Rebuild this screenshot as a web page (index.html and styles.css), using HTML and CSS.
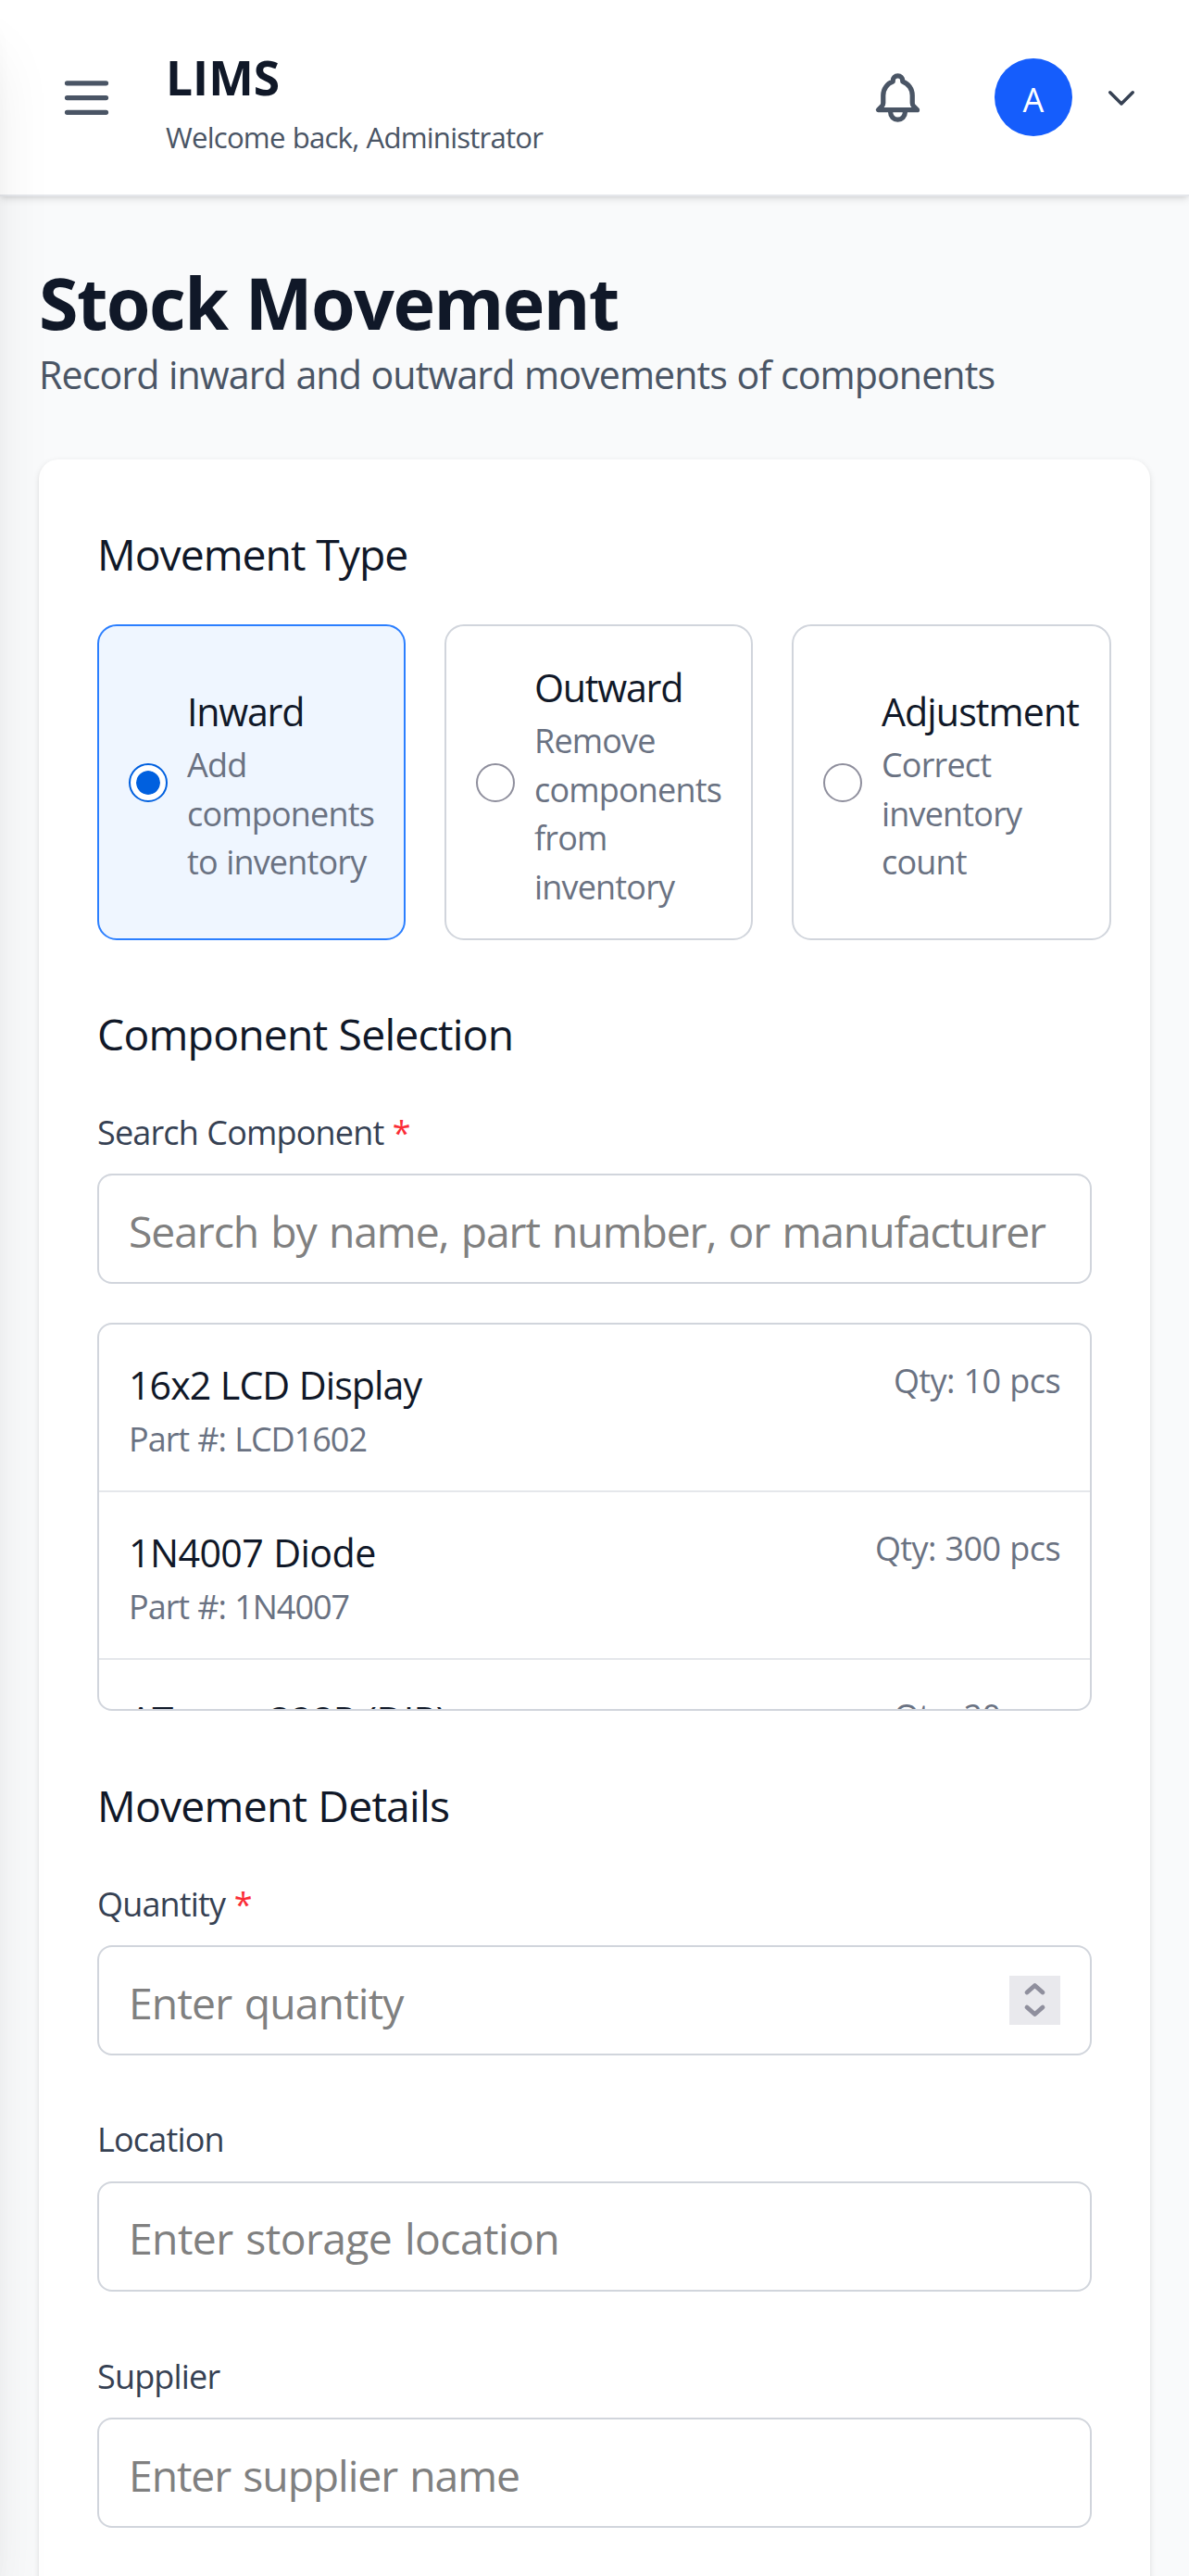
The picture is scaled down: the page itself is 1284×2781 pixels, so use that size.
FILE: index.html
```
<!DOCTYPE html>
<html lang="en">
<head>
<meta charset="utf-8">
<title>LIMS - Stock Movement</title>
<link rel="stylesheet" href="styles.css">
</head>
<body>
<aside class="sidebar"></aside>
<header class="header">
  <svg class="icon" viewBox="0 0 24 24"><path d="M4 6h16M4 12h16M4 18h16"/></svg>
  <div class="brand">
    <h1 class="brand-name">LIMS</h1>
    <p class="brand-welcome">Welcome back, Administrator</p>
  </div>
  <svg class="icon bell" viewBox="0 0 24 24"><path d="M15 17h5l-1.405-1.405A2.032 2.032 0 0118 14.158V11a6.002 6.002 0 00-4-5.659V5a2 2 0 10-4 0v.341C7.67 6.165 6 8.388 6 11v3.159c0 .538-.214 1.055-.595 1.436L4 17h5m6 0v1a3 3 0 11-6 0v-1m6 0H9"/></svg>
  <div class="avatar">A</div>
  <svg class="icon chevron" viewBox="0 0 24 24"><path d="M19 9l-7 7-7-7"/></svg>
</header>
<main class="main">
  <h2 class="title">Stock Movement</h2>
  <p class="subtitle">Record inward and outward movements of components</p>
  <form class="card">
    <section>
      <h3 class="section-title tight">Movement Type</h3>
      <div class="types">
        <label class="type selected">
          <span class="radio"></span>
          <span class="type-text"><span class="type-name tight">Inward</span><span class="type-desc">Add components to inventory</span></span>
        </label>
        <label class="type">
          <span class="radio"></span>
          <span class="type-text"><span class="type-name tight">Outward</span><span class="type-desc">Remove components from inventory</span></span>
        </label>
        <label class="type">
          <span class="radio"></span>
          <span class="type-text"><span class="type-name">Adjustment</span><span class="type-desc">Correct inventory count</span></span>
        </label>
      </div>
    </section>
    <section class="selection">
      <h3 class="section-title">Component Selection</h3>
      <div class="field">
        <label class="label">Search Component <span class="required">*</span></label>
        <div class="control"><input class="input search" type="text" placeholder="Search by name, part number, or manufacturer"></div>
      </div>
      <div class="list">
        <div class="row">
          <div><div class="row-name">16x2 LCD Display</div><div class="row-part">Part #: LCD1602</div></div>
          <div class="row-qty">Qty: 10 pcs</div>
        </div>
        <div class="row">
          <div><div class="row-name loose">1N4007 Diode</div><div class="row-part">Part #: 1N4007</div></div>
          <div class="row-qty">Qty: 300 pcs</div>
        </div>
        <div class="row">
          <div><div class="row-name loose">ATmega328P (DIP)</div></div>
          <div class="row-qty">Qty: 20 pcs</div>
        </div>
      </div>
    </section>
    <section class="details">
      <h3 class="section-title">Movement Details</h3>
      <div class="field">
        <label class="label">Quantity <span class="required">*</span></label>
        <div class="control">
          <input class="input" type="text" placeholder="Enter quantity">
          <svg class="spinner" viewBox="0 0 55 53"><path d="M19 18l8.500-7.500 8.500 7.500M19 34l8.500 7.500 8.500-7.500"/></svg>
        </div>
      </div>
      <div class="field">
        <label class="label">Location</label>
        <div class="control"><input class="input loose" type="text" placeholder="Enter storage location"></div>
      </div>
      <div class="field">
        <label class="label">Supplier</label>
        <div class="control"><input class="input tight" type="text" placeholder="Enter supplier name"></div>
      </div>
    </section>
  </form>
</main>
</body>
</html>
```
FILE: styles.css
```
* { box-sizing: border-box; margin: 0; padding: 0; }
html, body { height: 2781px; overflow: hidden; }
body {
  background: #f9fafb;
  color: #101828;
  font-family: "Open Sans", "Noto Sans", sans-serif;
  word-spacing: .05em;
}
h1, h2, h3 { font-weight: 400; }

/* Off-canvas drawer: only its shadow reaches the page */
.sidebar {
  position: absolute;
  z-index: 2;
  left: -672px;
  top: 0;
  width: 672px;
  height: 2781px;
  background: #fff;
  box-shadow: 0 52px 66px -13px rgba(0,0,0,.1), 0 21px 26px -16px rgba(0,0,0,.1);
}

.header {
  position: relative;
  display: flex;
  align-items: center;
  height: 212px;
  padding: 0 52px 0 62px;
  background: #fff;
  border-bottom: 2px solid #e5e7eb;
  box-shadow: 0 2.600px 7.900px rgba(0,0,0,.1), 0 2.600px 5.200px -2.600px rgba(0,0,0,.1);
}
.icon {
  width: 63px;
  height: 63px;
  flex: none;
  fill: none;
  stroke: #4a5565;
  stroke-width: 2;
  stroke-linecap: round;
  stroke-linejoin: round;
}
.brand { flex: 1; padding: 6px 0 0 54px; }
.brand-name {
  font-size: 51.500px;
  line-height: 72.500px;
  font-weight: 700;
}
.brand-welcome {
  margin-top: 7px;
  font-size: 31.200px;
  line-height: 42px;
  letter-spacing: -.026em;
  color: #4a5565;
}
.avatar {
  width: 84px;
  height: 84px;
  margin: 0 32px 0 73px;
  padding-top: 5px;
  border-radius: 50%;
  background: #155dfc;
  color: #fff;
  font-size: 36px;
  line-height: 80px;
  text-align: center;
}
.chevron { width: 42px; height: 42px; stroke: #364153; }

.main { padding: 68px 42px 0; }
.title {
  font-size: 77.200px;
  line-height: 93px;
  font-weight: 700;
  letter-spacing: -.0205em;
}
.subtitle {
  font-size: 41.200px;
  line-height: 63px;
  letter-spacing: -.0228em;
  color: #4a5565;
}
.card {
  height: 2400px;
  margin-top: 60px;
  padding: 66px 63px;
  border-radius: 21px;
  background: #fff;
  box-shadow: 0 2.600px 7.900px rgba(0,0,0,.1), 0 2.600px 5.200px -2.600px rgba(0,0,0,.1);
}
.section-title {
  font-size: 46.300px;
  line-height: 73.500px;
  letter-spacing: -.0165em;
}
.section-title.tight { letter-spacing: -.0215em; }

.types {
  display: grid;
  grid-template-columns: 333px 333px 345px;
  gap: 42px;
  margin-top: 38.500px;
}
.type {
  display: flex;
  align-items: center;
  gap: 21px;
  height: 341px;
  padding: 0 29px 0 32px;
  border: 2px solid #d1d5dc;
  border-radius: 21px;
}
.selected { border-color: #2b7fff; background: #eff6ff; }
.radio {
  flex: none;
  width: 42px;
  height: 42px;
  border: 2.600px solid #8f8f9d;
  border-radius: 50%;
  background: #fff;
}
.selected .radio {
  padding: 6px;
  border-color: #0060df;
  background: #0060df content-box;
  box-shadow: inset 0 0 0 6px #fff;
}
.type-text { flex: 1; padding-top: 6px; }
.type-name, .type-desc { display: block; }
.type-name {
  font-size: 41.200px;
  line-height: 63px;
  letter-spacing: -.0228em;
}
.type-name.tight { letter-spacing: -.0300em; }
.type-desc {
  font-size: 36px;
  line-height: 52.500px;
  letter-spacing: -.0230em;
  color: #6a7282;
}

.selection { margin-top: 65px; }
.field { margin-top: 43px; }
.label {
  display: block;
  font-size: 36px;
  line-height: 52.500px;
  letter-spacing: -.0230em;
  color: #364153;
}
.required { color: #fb2c36; }
.control {
  display: flex;
  align-items: center;
  height: 119px;
  margin-top: 18px;
  padding: 0 32px;
  border: 2px solid #d1d5dc;
  border-radius: 16px;
}
.input {
  flex: 1;
  min-width: 0;
  height: 100%;
  padding-top: 5px;
  border: 0;
  outline: 0;
  background: none;
  font: 46.300px "Open Sans", "Noto Sans", sans-serif;
  letter-spacing: -.0185em;
  word-spacing: .05em;
}
.input.search { letter-spacing: -.0235em; }
.input.loose { letter-spacing: -.0130em; }
.input.tight { letter-spacing: -.0235em; }
.input::placeholder { color: #808080; opacity: 1; }
.spinner {
  width: 55px;
  height: 53px;
  background: #e9e9ed;
  fill: none;
  stroke: #8f8f9d;
  stroke-width: 4.800;
  stroke-linecap: round;
  stroke-linejoin: round;
}

.list {
  height: 419px;
  margin-top: 42px;
  border: 2px solid #d1d5dc;
  border-radius: 16px;
  overflow: hidden;
}
.row {
  display: flex;
  justify-content: space-between;
  height: 181px;
  padding: 34px 32px 0;
  border-bottom: 2px solid #e5e7eb;
}
.row-name {
  font-size: 41.200px;
  line-height: 63px;
  letter-spacing: -.0235em;
}
.row-name.loose { letter-spacing: -.0140em; }
.row-part, .row-qty {
  padding-top: 1px;
  font-size: 36px;
  line-height: 52.500px;
  color: #6a7282;
}
.row-part { letter-spacing: -.0280em; }
.row-qty { letter-spacing: -.0155em; }

.details { margin-top: 66px; }
.details .field { margin-top: 66px; }
.details .section-title + .field { margin-top: 43px; }
.details .section-title + .field + .field { margin-top: 65px; }
```
